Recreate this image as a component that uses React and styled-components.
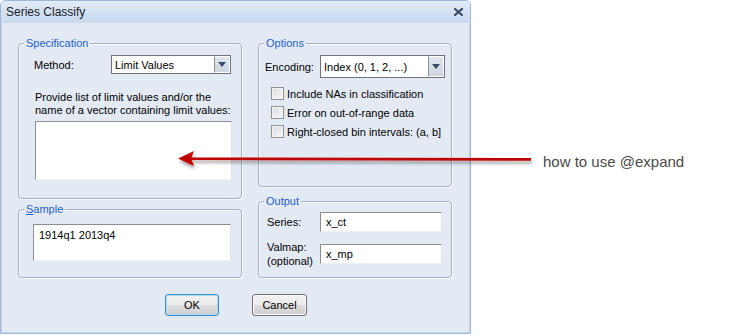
import React from "react";
import styled, { createGlobalStyle } from "styled-components";

const GlobalStyle = createGlobalStyle`
  html, body {
    margin: 0;
    padding: 0;
    background: #fff;
  }
  body {
    font-family: "Liberation Sans", Arial, sans-serif;
    font-size: 11px;
    color: #000;
  }
`;

const Page = styled.div`
  position: relative;
  width: 750px;
  height: 336px;
  display: flex;
  align-items: flex-start;
`;

const Window = styled.div`
  width: 471px;
  height: 334px;
  box-sizing: border-box;
  border: 1px solid #9fb8d9;
  border-radius: 5px 5px 0 0;
  background: #e3eaf4;
  box-shadow: inset 1px 0 0 #c5d6ec, inset -1px 0 0 #c5d6ec, inset 0 -1px 0 #c5d6ec;
  display: flex;
  flex-direction: column;
  overflow: hidden;
`;

const TitleBar = styled.div`
  height: 22px;
  flex: none;
  display: flex;
  align-items: center;
  justify-content: space-between;
  padding: 0 7px 0 5px;
  background: linear-gradient(#e3ecf8, #d2dff1 60%, #c9d9ef);
  font-size: 12px;
  color: #16202e;
`;

const CloseIcon = () => (
  <svg width="9" height="8" viewBox="0 0 9 8">
    <path d="M1 1 L8 7 M8 1 L1 7" stroke="#3a4a66" strokeWidth="2.2" strokeLinecap="square" />
  </svg>
);

const Body = styled.div`
  display: grid;
  grid-template-columns: 224px 194px;
  column-gap: 16px;
  padding: 20px 0 0 17px;
`;

const Column = styled.div`
  display: flex;
  flex-direction: column;
  gap: ${(p) => p.$gap}px;
`;

const GroupBox = styled.div`
  position: relative;
  box-sizing: border-box;
  height: ${(p) => p.$height}px;
  border: 1px solid #a3b1c6;
  border-radius: 4px;
  box-shadow: inset 1px 1px 0 #fbfcfe, 1px 1px 0 #fbfcfe;
  padding: ${(p) => p.$pad};
  display: flex;
  flex-direction: column;
`;

const GroupTitle = styled.span`
  position: absolute;
  top: -8px;
  left: 5px;
  padding: 0 2px;
  background: #e3eaf4;
  color: #1f5fc4;
  font-size: 11px;
  line-height: 14px;
`;

const Row = styled.div`
  display: flex;
  align-items: center;
  margin-top: ${(p) => p.$top || 0}px;
`;

const Label = styled.span`
  width: ${(p) => p.$width}px;
  flex: none;
  line-height: 14px;
`;

const Select = styled.div`
  box-sizing: border-box;
  width: ${(p) => p.$width}px;
  height: ${(p) => p.$height}px;
  border: 1px solid #6f747c;
  background: #fff;
  display: flex;
  align-items: stretch;
`;

const SelectText = styled.span`
  flex: 1;
  display: flex;
  align-items: center;
  padding-left: 3px;
`;

const SelectButton = styled.span`
  width: 16px;
  box-sizing: border-box;
  border: 1px solid #fff;
  border-left: 1px solid #8a929d;
  background: linear-gradient(#e2e7ee, #cdd5e0);
  display: flex;
  align-items: center;
  justify-content: center;
`;

const ArrowDown = () => (
  <svg width="8" height="5" viewBox="0 0 8 5">
    <path d="M0 0 H8 L4 5 Z" fill="#3b4a63" />
  </svg>
);

const Description = styled.p`
  margin: 17px 0 0 1px;
  line-height: 13px;
`;

const TextField = styled.div`
  box-sizing: border-box;
  width: ${(p) => p.$width}px;
  height: ${(p) => p.$height}px;
  margin-top: ${(p) => p.$top || 0}px;
  margin-left: ${(p) => p.$left || 0}px;
  background: #fff;
  border: 1px solid;
  border-color: #8b8e93 #dfe3e8 #eef1f4 #8b8e93;
  padding: ${(p) => p.$pad || "0 5px"};
  line-height: 13px;
  display: flex;
  align-items: ${(p) => (p.$multiline ? "flex-start" : "center")};
`;

const CheckList = styled.div`
  display: flex;
  flex-direction: column;
  margin: 6px 0 0 6px;
`;

const CheckRow = styled.label`
  height: 19px;
  display: flex;
  align-items: center;
  gap: 3px;
`;

const CheckBox = styled.span`
  width: 13px;
  height: 13px;
  box-sizing: border-box;
  border: 1px solid #8f9194;
  background: linear-gradient(135deg, #d9dcdf, #f7f8f9);
  box-shadow: inset 0 0 0 1px #f4f5f6;
`;

const ButtonRow = styled.div`
  display: flex;
  justify-content: center;
  gap: 33px;
  margin-top: 16px;
  padding-left: 1px;
`;

const Button = styled.button`
  box-sizing: border-box;
  width: ${(p) => p.$width}px;
  height: 22px;
  padding: 0;
  font-family: inherit;
  font-size: 11px;
  color: #000;
  border-radius: 3px;
  border: 1px solid ${(p) => (p.$focus ? "#3c8fc8" : "#707070")};
  background: linear-gradient(#f2f2f2 0%, #ebebeb 50%, #dddddd 51%, #cfcfcf 100%);
  box-shadow: inset 0 0 0 1px ${(p) => (p.$focus ? "#a6dcf5" : "#fbfbfb")};
`;

const Overlay = styled.svg`
  position: absolute;
  left: 0;
  top: 0;
  pointer-events: none;
`;

const Note = styled.span`
  position: absolute;
  left: 543px;
  top: 153px;
  font-size: 15px;
  line-height: 18px;
  color: #4a4a4a;
`;

function App() {
  return (
    <Page>
      <GlobalStyle />
      <Window>
        <TitleBar>
          <span>Series Classify</span>
          <CloseIcon />
        </TitleBar>
        <Body>
          <Column $gap={10}>
            <GroupBox $height={156} $pad="11px 0 0 15px">
              <GroupTitle>Specification</GroupTitle>
              <Row>
                <Label $width={77}>Method:</Label>
                <Select $width={120} $height={19}>
                  <SelectText>Limit Values</SelectText>
                  <SelectButton>
                    <ArrowDown />
                  </SelectButton>
                </Select>
              </Row>
              <Description>
                Provide list of limit values and/or the
                <br />
                name of a vector containing limit values:
              </Description>
              <TextField $width={197} $height={59} $top={4} $left={1} $multiline />
            </GroupBox>
            <GroupBox $height={69} $pad="14px 0 0 14px">
              <GroupTitle>
                <u>S</u>ample
              </GroupTitle>
              <TextField $width={198} $height={37} $pad="4px 5px" $multiline>
                1914q1 2013q4
              </TextField>
            </GroupBox>
          </Column>
          <Column $gap={14}>
            <GroupBox $height={144} $pad="11px 0 0 6px">
              <GroupTitle>Options</GroupTitle>
              <Row>
                <Label $width={55}>Encoding:</Label>
                <Select $width={125} $height={23}>
                  <SelectText>Index (0, 1, 2, ...)</SelectText>
                  <SelectButton>
                    <ArrowDown />
                  </SelectButton>
                </Select>
              </Row>
              <CheckList>
                <CheckRow>
                  <CheckBox />
                  Include NAs in classification
                </CheckRow>
                <CheckRow>
                  <CheckBox />
                  Error on out-of-range data
                </CheckRow>
                <CheckRow>
                  <CheckBox />
                  Right-closed bin intervals: (a, b]
                </CheckRow>
              </CheckList>
            </GroupBox>
            <GroupBox $height={77} $pad="10px 0 0 8px">
              <GroupTitle>Output</GroupTitle>
              <Row>
                <Label $width={53}>Series:</Label>
                <TextField $width={122} $height={20}>
                  x_ct
                </TextField>
              </Row>
              <Row $top={8}>
                <Label $width={53}>
                  Valmap:
                  <br />
                  (optional)
                </Label>
                <TextField $width={122} $height={20}>
                  x_mp
                </TextField>
              </Row>
            </GroupBox>
          </Column>
        </Body>
        <ButtonRow>
          <Button $width={54} $focus>
            OK
          </Button>
          <Button $width={55}>Cancel</Button>
        </ButtonRow>
      </Window>

      <Overlay width="750" height="336" viewBox="0 0 750 336">
        <defs>
          <filter id="arrowShadow" x="-5%" y="-100%" width="110%" height="300%">
            <feDropShadow dx="1" dy="3" stdDeviation="1.4" floodColor="#000" floodOpacity="0.35" />
          </filter>
        </defs>
        <g filter="url(#arrowShadow)">
          <line x1="190" y1="158.8" x2="531" y2="159.4" stroke="#c00000" strokeWidth="2.6" />
          <path d="M178 158.5 L194 151 L191 158.6 L194 166 Z" fill="#c00000" />
        </g>
      </Overlay>
      <Note>how to use @expand</Note>
    </Page>
  );
}

export default App;
